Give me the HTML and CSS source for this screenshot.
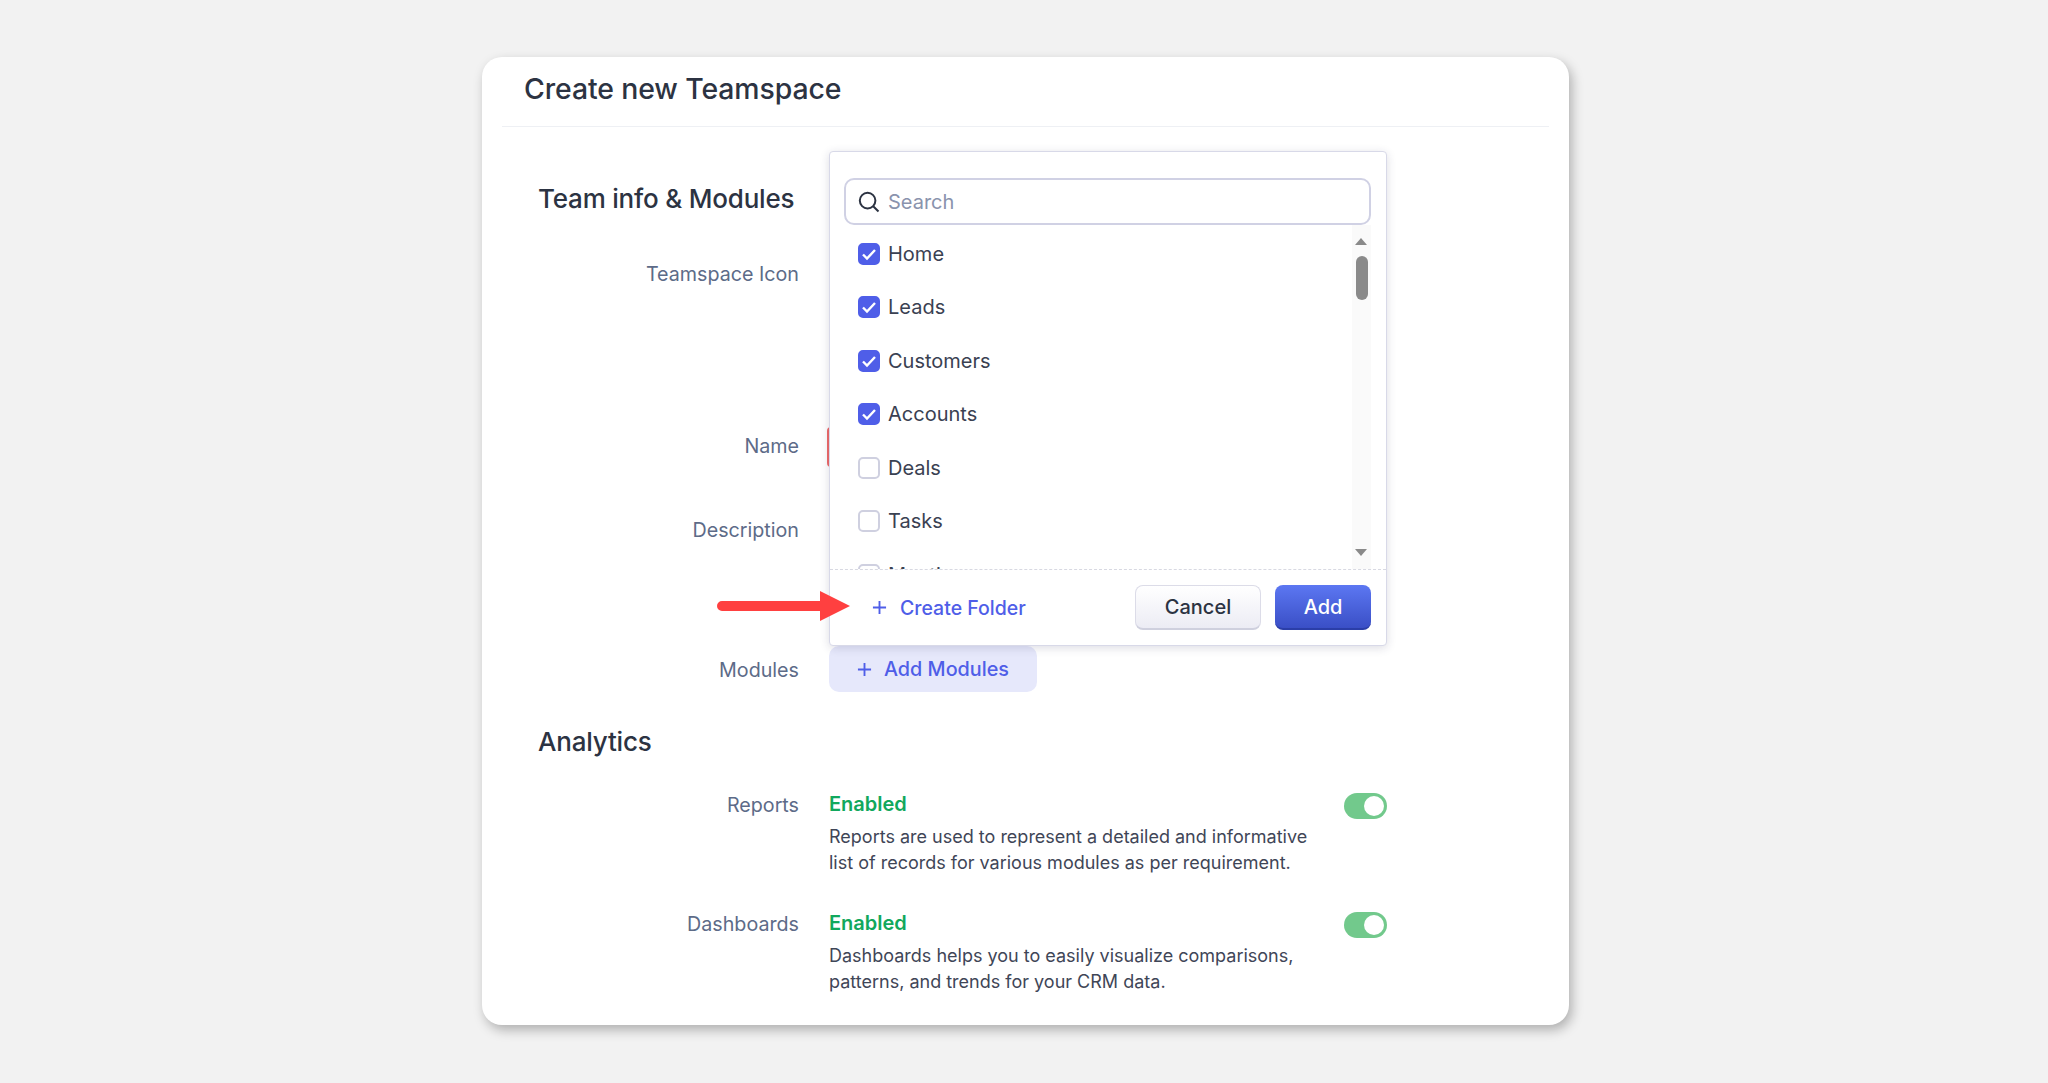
FILE: index.html
```html
<!DOCTYPE html>
<html lang="en">
<head>
<meta charset="utf-8">
<title>Create new Teamspace</title>
<link rel="stylesheet" href="styles.css">
</head>
<body>
<main class="page">
  <section class="card">
    <header class="head"><h1 class="title">Create new Teamspace</h1></header>
    <div class="body">
      <h2 class="section first">Team info &amp; Modules</h2>
      <div class="row row-icon"><div class="label">Teamspace Icon</div><div></div></div>
      <div class="row row-name"><div class="label">Name</div><div class="name-input"></div></div>
      <div class="row row-desc"><div class="label">Description</div><div></div></div>
      <div class="row row-mod">
        <div class="label">Modules</div>
        <div><button class="add-mod"><svg class="plus" viewBox="0 0 16 16"><path d="M8 1v14M1 8h14"/></svg>Add Modules</button></div>
      </div>
      <h2 class="section second">Analytics</h2>
      <div class="row row-an">
        <div class="label">Reports</div>
        <div class="an-main">
          <div class="enabled">Enabled</div>
          <p class="desc">Reports are used to represent a detailed and informative<br>list of records for various modules as per requirement.</p>
        </div>
        <div class="toggle"><span class="knob"></span></div>
      </div>
      <div class="row row-an">
        <div class="label">Dashboards</div>
        <div class="an-main">
          <div class="enabled">Enabled</div>
          <p class="desc">Dashboards helps you to easily visualize comparisons,<br>patterns, and trends for your CRM data.</p>
        </div>
        <div class="toggle"><span class="knob"></span></div>
      </div>
    </div>

    <div class="popup">
      <div class="search">
        <svg class="search-ic" viewBox="0 0 22 22"><circle cx="9.6" cy="9.6" r="7.8"/><path d="M15.2 15.2l5.3 5.3"/></svg>
        <span class="ph">Search</span>
      </div>
      <div class="list">
        <ul class="items">
          <li class="item"><span class="cb on"><svg viewBox="0 0 22 22"><path d="M5 11.5l4 4 8-8.5"/></svg></span>Home</li>
          <li class="item"><span class="cb on"><svg viewBox="0 0 22 22"><path d="M5 11.5l4 4 8-8.5"/></svg></span>Leads</li>
          <li class="item"><span class="cb on"><svg viewBox="0 0 22 22"><path d="M5 11.5l4 4 8-8.5"/></svg></span>Customers</li>
          <li class="item"><span class="cb on"><svg viewBox="0 0 22 22"><path d="M5 11.5l4 4 8-8.5"/></svg></span>Accounts</li>
          <li class="item"><span class="cb"></span>Deals</li>
          <li class="item"><span class="cb"></span>Tasks</li>
          <li class="item"><span class="cb"></span>Meetings</li>
        </ul>
        <div class="scrollbar">
          <span class="arrow up"></span>
          <span class="thumb"></span>
          <span class="arrow down"></span>
        </div>
      </div>
      <div class="foot">
        <div class="create"><svg class="plus" viewBox="0 0 16 16"><path d="M8 1v14M1 8h14"/></svg>Create Folder</div>
        <div class="btns">
          <button class="btn cancel">Cancel</button>
          <button class="btn add">Add</button>
        </div>
      </div>
    </div>

    <svg class="callout" viewBox="0 0 133 30"><path d="M5 10h98V0l30 15-30 15V20H5a5 5 0 0 1 0-10z"/></svg>
  </section>
</main>
</body>
</html>
```
FILE: styles.css
```css
* { box-sizing: border-box; }
html, body { margin: 0; height: 100%; }
body {
  background: #f2f2f2;
  font-family: Inter, "Noto Sans", sans-serif;
  color: #2c3342;
  overflow: hidden;
}
.page { padding: 57px 0 0 482px; }
.card {
  position: relative;
  width: 1087px;
  height: 968px;
  background: #fff;
  border-radius: 20px;
  box-shadow: 3px 5px 12px rgba(0, 0, 0, .28);
}
.head {
  margin: 0 20px;
  height: 70px;
  padding-left: 22px;
  border-bottom: 1px solid #eef0f4;
  display: flex;
  align-items: center;
}
.title { margin: 0 0 7px; font-size: 28.4px; font-weight: 500; letter-spacing: -.1px; }
.body { padding-left: 56px; }
.section { margin: 0; font-size: 26px; line-height: 32px; font-weight: 500; letter-spacing: -.2px; }
.section.first { margin-top: 56px; }
.section.second { margin-top: 34px; }
.row {
  display: grid;
  grid-template-columns: 260px 558px;
  column-gap: 31px;
  position: relative;
}
.label { text-align: right; font-size: 19.7px; line-height: 26px; color: #5d6b88; margin-right: -1px; }
.row-icon { margin-top: 46px; height: 166px; }
.row-name { height: 90px; }
.row-name .label { margin-top: 6px; }
.name-input {
  margin-left: -2px;
  height: 40px;
  border: 2px solid #ef6a6a;
  border-radius: 4px;
}
.row-desc { height: 129px; }
.row-mod { height: 46px; }
.row-mod .label { margin-top: 11px; }
.add-mod {
  display: inline-flex;
  align-items: center;
  gap: 12px;
  width: 208px;
  height: 46px;
  padding: 0 0 0 28px;
  border: 0;
  border-radius: 10px;
  background: #e6e8fb;
  color: #4f5ee8;
  font: 500 19.8px Inter, sans-serif;
}
.plus { width: 15px; height: 15px; flex: none; fill: none; stroke: #4f5ee8; stroke-width: 2; }
.row-an { height: 119px; grid-template-columns: 260px 484px 43px; }
.second + .row-an { margin-top: 34px; }
.enabled { font-size: 20px; line-height: 24px; font-weight: 600; color: #11a85d; }
.desc { margin: 7.5px 0 0; font-size: 18px; line-height: 26px; color: #3f4657; white-space: nowrap; }
.toggle {
  margin-top: 1px;
  width: 43px;
  height: 26px;
  border-radius: 13px;
  background: #72c98c;
  position: relative;
}
.knob {
  position: absolute;
  right: 3px;
  top: 3px;
  width: 20px;
  height: 20px;
  border-radius: 50%;
  background: #fff;
}

/* dropdown over the form */
.popup {
  position: absolute;
  left: 347px;
  top: 94px;
  width: 558px;
  height: 495px;
  background: #fff;
  border: 1px solid #d8d9e8;
  border-radius: 4px;
  box-shadow: 0 2px 10px rgba(40, 40, 80, .16);
  padding: 26px 15px 0 14px;
  display: flex;
  flex-direction: column;
}
.search {
  height: 47px;
  flex: none;
  border: 2px solid #d0d1e4;
  border-radius: 10px;
  display: flex;
  align-items: center;
  padding-left: 12px;
  gap: 8px;
}
.search-ic { width: 22px; height: 22px; fill: none; stroke: #2c3342; stroke-width: 2; }
.ph { font-size: 20px; color: #8a93ad; }
.list { height: 344px; flex: none; display: flex; overflow: hidden; }
.items { flex: 1; margin: 0; padding: 2px 0 0 14px; list-style: none; }
.item {
  height: 53.5px;
  display: flex;
  align-items: center;
  gap: 8px;
  font-size: 20px;
  color: #3a4152;
}
.cb {
  width: 22px;
  height: 22px;
  flex: none;
  border: 2px solid #cfd0e0;
  border-radius: 5px;
  background: #fff;
}
.cb.on { background: #4f5ee8; border-color: #4f5ee8; }
.cb svg { display: block; width: 22px; height: 22px; margin: -2px; fill: none; stroke: #fff; stroke-width: 2.4; }
.scrollbar {
  width: 19px;
  flex: none;
  background: #fafafa;
  position: relative;
}
.arrow {
  position: absolute;
  left: 3px;
  width: 0;
  height: 0;
  border-left: 6.5px solid transparent;
  border-right: 6.5px solid transparent;
}
.arrow.up { top: 13px; border-bottom: 7px solid #8a8a8a; }
.arrow.down { top: 324px; border-top: 7px solid #8a8a8a; }
.thumb {
  position: absolute;
  left: 3.5px;
  top: 31px;
  width: 12px;
  height: 44px;
  border-radius: 6px;
  background: #8a8a8a;
}
.foot {
  margin: 0 -15px 0 -14px;
  padding: 0 15px 0 42px;
  flex: 1;
  border-top: 1px dashed #d8d9e2;
  display: flex;
  align-items: center;
  justify-content: space-between;
}
.create { display: flex; align-items: center; gap: 13px; font-size: 19.5px; font-weight: 500; color: #4f5ee8; }
.btns { display: flex; gap: 14px; }
.btn {
  height: 45px;
  border-radius: 8px;
  font: 500 20px Inter, sans-serif;
  padding: 0;
}
.cancel {
  width: 126px;
  border: 1px solid #dcdce8;
  border-bottom: 2px solid #cfd0de;
  background: linear-gradient(#fff, #ececf4);
  color: #2c3342;
}
.add {
  width: 96px;
  border: 0;
  border-bottom: 2px solid #2b3ea8;
  background: linear-gradient(#5c77f2, #3a4fc6);
  color: #fff;
}
.callout {
  position: absolute;
  left: 235px;
  top: 534px;
  width: 133px;
  height: 30px;
  fill: #ff4040;
}
```
